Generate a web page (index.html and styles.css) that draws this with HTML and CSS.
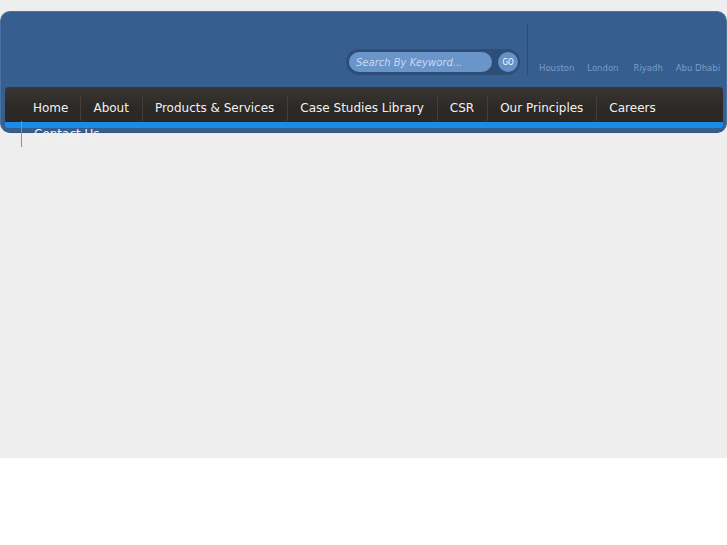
FILE: index.html
```html
<!DOCTYPE html>
<html>
<head>
<meta charset="utf-8">
<link rel="stylesheet" href="styles.css">
</head>
<body>
<div class="page">
  <header class="header">
    <div class="top">
      <form class="search">
        <input class="search-input" type="text" placeholder="Search By Keyword...">
        <button class="go" type="button">GO</button>
      </form>
      <div class="divider"></div>
      <ul class="cities">
        <li>Houston</li>
        <li>London</li>
        <li class="riyadh">Riyadh</li>
        <li>Abu Dhabi</li>
      </ul>
    </div>
    <nav class="nav">
      <ul class="menu">
        <li class="first">Home</li>
        <li>About</li>
        <li>Products &amp; Services</li>
        <li>Case Studies Library</li>
        <li>CSR</li>
        <li>Our Principles</li>
        <li>Careers</li>
        <li class="last">Contact Us</li>
      </ul>
    </nav>
  </header>
</div>
</body>
</html>
```
FILE: styles.css
```css
html, body {
  margin: 0;
  padding: 0;
  background: #ffffff;
  font-family: "DejaVu Sans", Verdana, sans-serif;
}

.page {
  background: #eeeeee;
  height: 458px;
  padding-top: 11px;
  box-sizing: border-box;
}

.header {
  box-sizing: border-box;
  width: 727px;
  height: 122px;
  background: #365e8f;
  border: 1px solid #4c72a2;
  border-bottom-color: #2f5482;
  border-radius: 10px;
  display: flex;
  flex-direction: column;
}

.top {
  height: 75px;
  display: flex;
  justify-content: flex-end;
  align-items: flex-end;
  padding: 0 6px 12px 0;
  box-sizing: border-box;
}

.search {
  margin: 0 7px 0 0;
  width: 174px;
  height: 26px;
  background: #2c4e79;
  border-radius: 13px;
  display: flex;
  align-items: center;
  padding: 0 2px 0 3px;
  box-sizing: border-box;
  gap: 6px;
}

.search-input {
  width: 143px;
  height: 20px;
  border: none;
  border-radius: 10px;
  background: #6a95c9;
  padding: 0 0 0 7px;
  box-sizing: border-box;
  font-family: "DejaVu Sans", sans-serif;
  font-style: italic;
  font-size: 10px;
  color: #d6e2f2;
  outline: none;
}

.search-input::placeholder {
  color: #c9d9ee;
  opacity: 1;
}

.go {
  width: 20px;
  height: 20px;
  border: none;
  border-radius: 50%;
  background: #6690c6;
  color: #ffffff;
  font-family: "DejaVu Sans Condensed", "DejaVu Sans", sans-serif;
  font-size: 8px;
  padding: 0;
  display: flex;
  align-items: center;
  justify-content: center;
}

.divider {
  width: 1px;
  height: 51px;
  background: #2a4b75;
  margin-right: 11px;
}

.cities {
  list-style: none;
  margin: 0;
  padding: 0 0 1px 0;
  display: flex;
  gap: 13px;
  font-size: 8.5px;
  line-height: 11px;
  color: #7b9dca;
}

.cities .riyadh {
  margin-left: 2px;
}

.nav {
  margin: 0 3px 0 4px;
  height: 41px;
  box-sizing: border-box;
  background: linear-gradient(#3a3531, #2c2926 60%, #2a2724);
  border-radius: 4px 4px 3px 3px;
  border-bottom: 6px solid #1c8be8;
  padding: 8px 0 0 16px;
}

.menu {
  list-style: none;
  margin: 0;
  padding: 0;
  display: flex;
  flex-wrap: wrap;
  font-size: 12px;
  line-height: 26px;
  color: #f2f2f2;
}

.menu li {
  padding: 0 13px 0 12px;
  border-left: 1px solid #423e3a;
  white-space: nowrap;
}

.menu li.first {
  border-left: none;
  padding-right: 12px;
}

.menu li.last {
  border-left-color: #8e8e8e;
}
```
